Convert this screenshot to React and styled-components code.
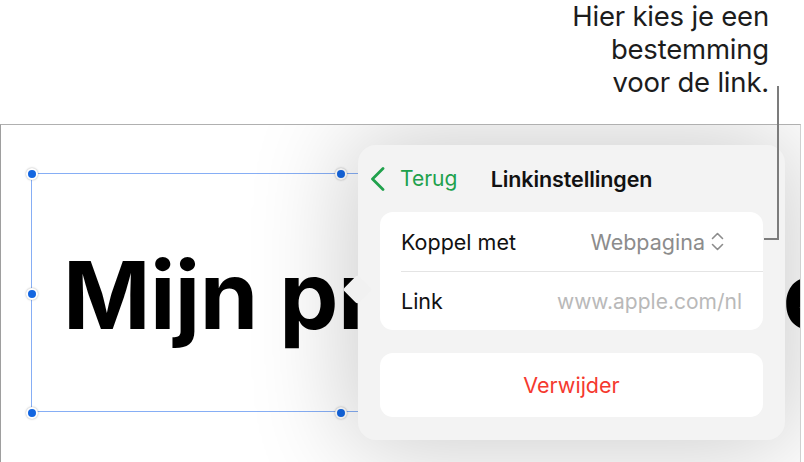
import React from "react";
import styled, { createGlobalStyle } from "styled-components";

const GlobalStyle = createGlobalStyle`
  * { box-sizing: border-box; }
  html, body { margin: 0; padding: 0; background: #fff; }
  body {
    font-family: "Inter", "Noto Sans", sans-serif;
    -webkit-font-smoothing: antialiased;
  }
`;

const Page = styled.div`
  position: relative;
  width: 804px;
  height: 462px;
  display: flex;
  flex-direction: column;
  overflow: hidden;
`;

const Callout = styled.div`
  height: 124px;
  flex-shrink: 0;
  padding: 0 35px 0 0;
  text-align: right;
  font-size: 27.5px;
  line-height: 33px;
  color: #1c1c1c;
  letter-spacing: -0.2px;
`;

const Leader = styled.div`
  position: absolute;
  left: 764px;
  top: 86px;
  width: 15px;
  height: 154px;
  border-right: 2px solid #7c7c7c;
  border-bottom: 2px solid #7c7c7c;
  z-index: 5;
`;

const Canvas = styled.div`
  position: relative;
  flex: 1;
  width: 801px;
  border-top: 1px solid #b0b0b0;
  border-left: 1px solid #9e9e9e;
  border-right: 1px solid #d0d0d0;
  background: #fff;
  overflow: hidden;
`;

const Selection = styled.div`
  position: absolute;
  left: 30px;
  top: 48px;
  width: 619px;
  height: 239px;
  border: 1.5px solid #86aef5;
  display: flex;
  align-items: center;
  padding: 4px 0 0 31px;
`;

const Title = styled.div`
  font-size: 94px;
  font-weight: 700;
  letter-spacing: -0.6px;
  color: #000;
  white-space: nowrap;
  line-height: 1;
`;

const TitleRest = styled.span`
  letter-spacing: 4px;
`;

const Handle = styled.span`
  position: absolute;
  width: 12px;
  height: 12px;
  border-radius: 50%;
  background: #1466e0;
  border: 2px solid #fff;
  box-shadow: 0 0 2px rgba(0, 0, 0, 0.35);
  left: ${({ $x }) => $x};
  top: ${({ $y }) => $y};
  transform: translate(-50%, -50%);
`;

const Popover = styled.div`
  position: absolute;
  left: 357px;
  top: 20px;
  width: 427px;
  border-radius: 18px;
  background: #f3f3f3;
  box-shadow: 0 0 100px 10px rgba(0, 0, 0, 0.2);
  padding: 0 22px 23px;
  display: flex;
  flex-direction: column;
  z-index: 2;
`;

const PopoverArrow = styled.div`
  position: absolute;
  left: -11px;
  top: 134px;
  width: 21px;
  height: 21px;
  background: #f1f1f1;
  border-radius: 3px;
  transform: rotate(45deg);
  z-index: 1;
`;

const Header = styled.div`
  position: relative;
  height: 67px;
  margin: 0 -22px;
  display: grid;
  grid-template-columns: 1fr auto 1fr;
  align-items: center;
  padding: 0 12px;
`;

const BackButton = styled.div`
  display: flex;
  align-items: center;
  gap: 14px;
  color: #20a14c;
  font-size: 21px;
`;

const HeaderTitle = styled.div`
  font-size: 21.5px;
  font-weight: 600;
  color: #111;
  letter-spacing: -0.1px;
`;

const Card = styled.div`
  position: relative;
  flex-shrink: 0;
  background: #fff;
  border-radius: 13px;
  overflow: hidden;
  & + & {
    margin-top: 23px;
  }
`;

const Row = styled.div`
  height: 59px;
  margin-left: 21px;
  padding-right: ${({ $pr }) => $pr || "21px"};
  display: flex;
  align-items: center;
  justify-content: space-between;
  font-size: 21.5px;
  color: #111;
  & + & {
    border-top: 1px solid #e4e4e4;
  }
`;

const Value = styled.span`
  display: flex;
  align-items: center;
  gap: 6px;
  color: ${({ $light }) => ($light ? "#b9b9b9" : "#8c8c8c")};
  font-size: ${({ $light }) => ($light ? "21px" : "21.5px")};
`;

const DeleteButton = styled.div`
  height: 64px;
  display: flex;
  align-items: center;
  justify-content: center;
  color: #f5392e;
  font-size: 21.5px;
`;

const BackChevron = () => (
  <svg width="16" height="24" viewBox="0 0 16 24" fill="none">
    <polyline
      points="13,1.5 2.5,12 13,22.5"
      stroke="currentColor"
      strokeWidth="2.8"
      strokeLinecap="round"
      strokeLinejoin="round"
    />
  </svg>
);

const UpDown = () => (
  <svg width="13" height="19" viewBox="0 0 13 19" fill="none">
    <polyline
      points="1.5,6.5 6.5,1.5 11.5,6.5"
      stroke="#8c8c8c"
      strokeWidth="1.6"
      strokeLinecap="round"
      strokeLinejoin="round"
    />
    <polyline
      points="1.5,12.5 6.5,17.5 11.5,12.5"
      stroke="#8c8c8c"
      strokeWidth="1.6"
      strokeLinecap="round"
      strokeLinejoin="round"
    />
  </svg>
);

const handles = [
  ["0px", "0px"],
  ["309px", "0px"],
  ["0px", "119.5px"],
  ["0px", "239px"],
  ["309px", "239px"],
];

export default function App() {
  return (
    <>
      <GlobalStyle />
      <Page>
        <Callout>
          Hier kies je een
          <br />
          bestemming
          <br />
          voor de link.
        </Callout>
        <Leader />
        <Canvas>
          <Selection>
            <Title>
              Mijn p<TitleRest>resentatie</TitleRest>
            </Title>
            {handles.map(([x, y], i) => (
              <Handle key={i} $x={x} $y={y} />
            ))}
          </Selection>
          <Popover>
            <PopoverArrow />
            <Header>
              <BackButton>
                <BackChevron />
                Terug
              </BackButton>
              <HeaderTitle>Linkinstellingen</HeaderTitle>
              <span />
            </Header>
            <Card>
              <Row $pr="39px">
                Koppel met
                <Value>
                  Webpagina
                  <UpDown />
                </Value>
              </Row>
              <Row>
                Link
                <Value $light>www.apple.com/nl</Value>
              </Row>
            </Card>
            <Card>
              <DeleteButton>Verwijder</DeleteButton>
            </Card>
          </Popover>
        </Canvas>
      </Page>
    </>
  );
}
